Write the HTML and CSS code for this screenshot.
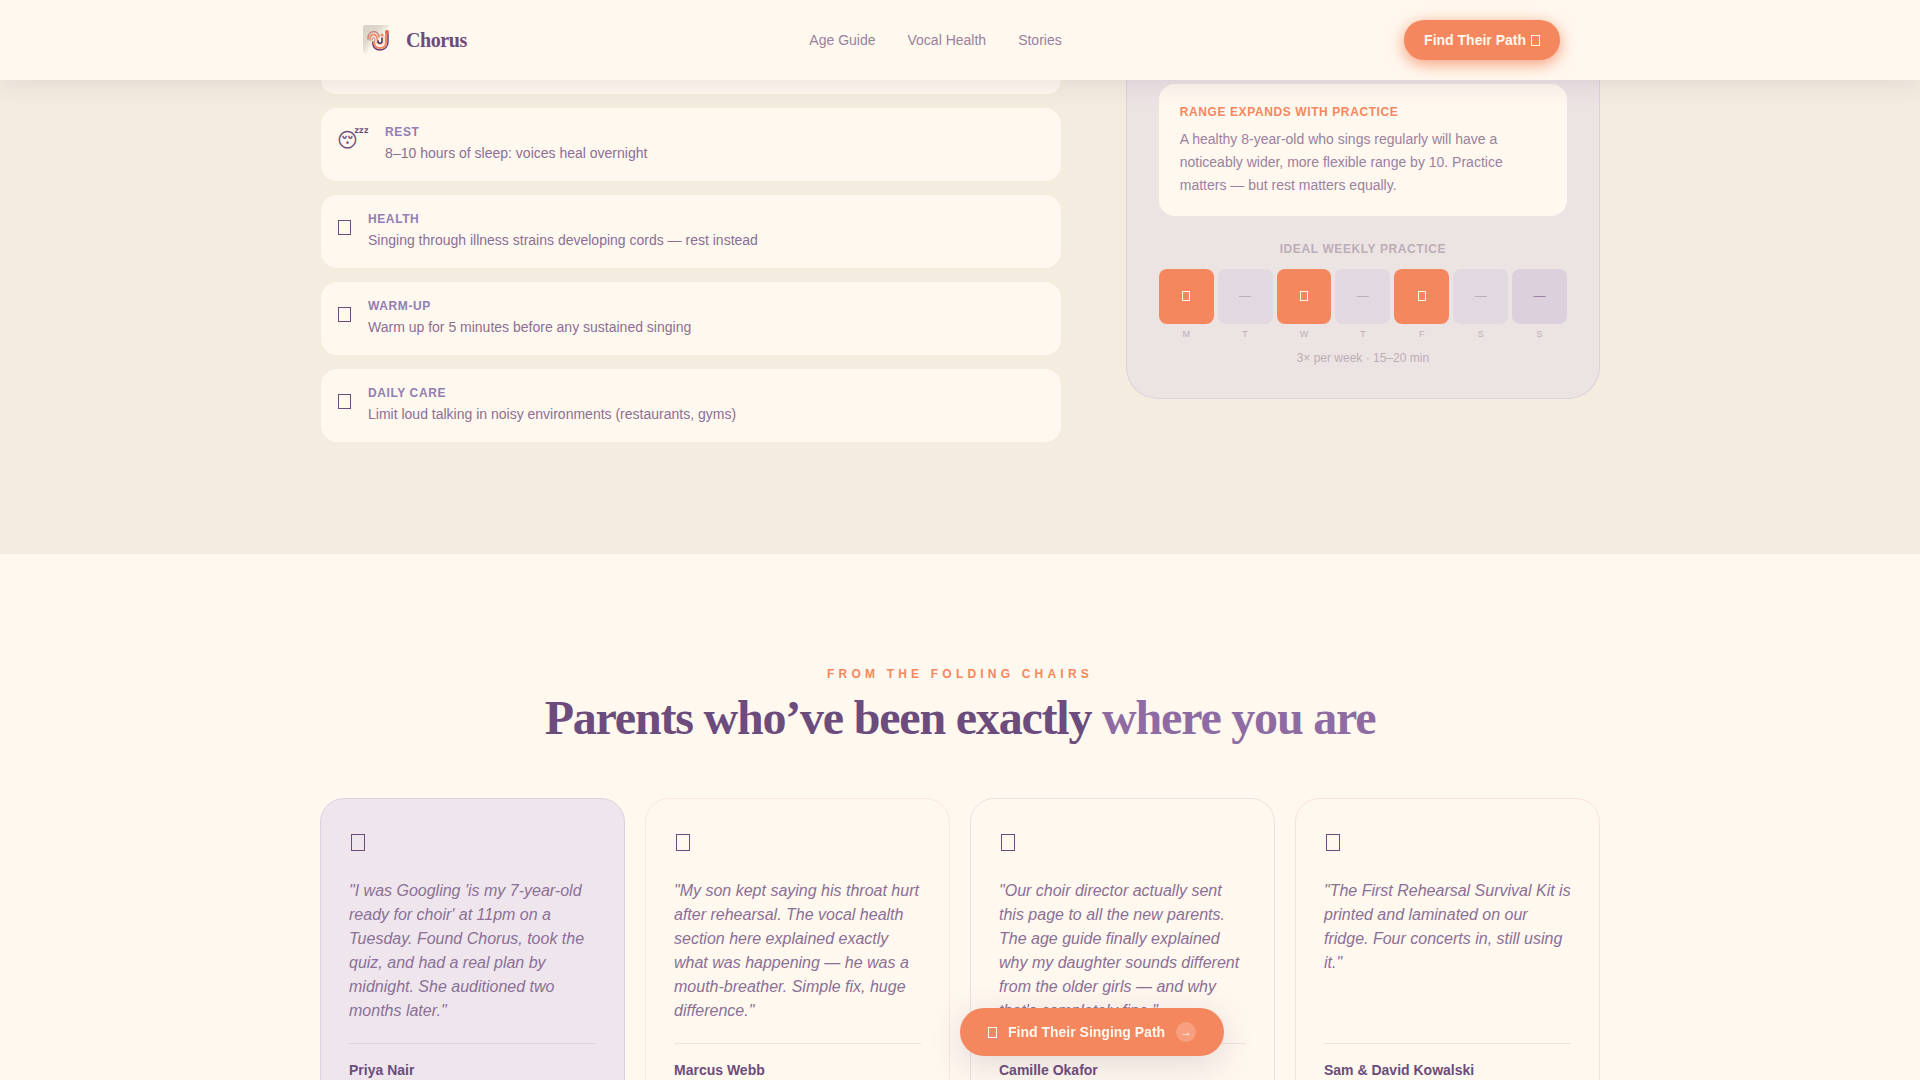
FILE: index.html
```html
<!DOCTYPE html>
<html lang="en">
<head>
    <meta charset="UTF-8">
    <meta name="viewport" content="width=device-width, initial-scale=1.0">
    <title>Chorus</title>
    <link rel="stylesheet" href="styles.css">
</head>
<body>
    <header class="site-header">
        <div class="header-inner">
            <a href="#" class="brand">
                <svg class="brand-logo" viewBox="0 0 32 32" aria-hidden="true">
                    <defs>
                        <linearGradient id="paper" x1="0" y1="0" x2="1" y2="1">
                            <stop offset="0" stop-color="#d6d2c6"/>
                            <stop offset="0.35" stop-color="#e0dacd"/>
                            <stop offset="0.6" stop-color="#fff8ee"/>
                        </linearGradient>
                    </defs>
                    <path d="M5 1h25l-3 4v14L10 22 7 30H5a2 2 0 0 1-2-2V3a2 2 0 0 1 2-2z" fill="url(#paper)"/>
                    <g fill="none" stroke-linecap="round">
                        <path d="M8 15C8 5 19 6 19 13" stroke="#c9837f" stroke-width="1.500"/>
                        <path d="M10 16c0-7 6-7 7-2l1 5" stroke="#f5875f" stroke-width="1.500"/>
                        <path d="M12 16c0-3 3-3 3 0l-1 4" stroke="#b98296" stroke-width="1"/>
                        <path d="M13 18c-1 5 3 8 7 8 5 0 8-4 8-8V10" stroke="#6b3f6d" stroke-width="1.500"/>
                        <path d="M14 18c0 4 3 6 6 6 4 0 6-3 6-6v-8" stroke="#f5875f" stroke-width="2"/>
                        <path d="M16 17c0 5 8 5 8 0v-5" stroke="#fbc0a4" stroke-width="1"/>
                        <path d="M18 17c0 3 4 3 4 0v-3" stroke="#3f2c56" stroke-width="1.500"/>
                    </g>
                    <circle cx="27" cy="8" r="2" fill="#e4604f"/>
                    <circle cx="22" cy="11" r="1.500" fill="#f5875f"/>
                </svg>
                <span class="brand-name">Chorus</span>
            </a>
            <nav class="main-nav">
                <a href="#">Age Guide</a>
                <a href="#health">Vocal Health</a>
                <a href="#stories">Stories</a>
            </nav>
            <button type="button" class="btn btn-header">Find Their Path <span class="glyph"></span></button>
        </div>
    </header>

    <section class="health" id="health">
        <div class="container health-grid">
            <div class="tips">
                <div class="tip-tail"></div>
                <ul class="tip-list">
                    <li class="tip">
                        <span class="tip-icon">😴&#xFE0E;</span>
                        <div>
                            <h4>Rest</h4>
                            <p>8–10 hours of sleep: voices heal overnight</p>
                        </div>
                    </li>
                    <li class="tip">
                        <span class="glyph glyph-md"></span>
                        <div>
                            <h4>Health</h4>
                            <p>Singing through illness strains developing cords — rest instead</p>
                        </div>
                    </li>
                    <li class="tip">
                        <span class="glyph glyph-md"></span>
                        <div>
                            <h4>Warm-up</h4>
                            <p>Warm up for 5 minutes before any sustained singing</p>
                        </div>
                    </li>
                    <li class="tip">
                        <span class="glyph glyph-md"></span>
                        <div>
                            <h4>Daily Care</h4>
                            <p>Limit loud talking in noisy environments (restaurants, gyms)</p>
                        </div>
                    </li>
                </ul>
            </div>

            <aside class="panel">
                <div class="panel-note">
                    <h4>Range expands with practice</h4>
                    <p>A healthy 8-year-old who sings regularly will have a noticeably wider, more flexible range by 10. Practice matters — but rest matters equally.</p>
                </div>
                <h4 class="week-title">Ideal weekly practice</h4>
                <div class="week">
                    <div class="day day-on"><div class="day-box"><span class="glyph glyph-sm"></span></div>M</div>
                    <div class="day"><div class="day-box">—</div>T</div>
                    <div class="day day-on"><div class="day-box"><span class="glyph glyph-sm"></span></div>W</div>
                    <div class="day"><div class="day-box">—</div>T</div>
                    <div class="day day-on"><div class="day-box"><span class="glyph glyph-sm"></span></div>F</div>
                    <div class="day"><div class="day-box">—</div>S</div>
                    <div class="day day-rest"><div class="day-box">—</div>S</div>
                </div>
                <p class="week-note">3× per week · 15–20 min</p>
            </aside>
        </div>
    </section>

    <section class="stories" id="stories">
        <div class="container">
            <p class="eyebrow">From the folding chairs</p>
            <h2>Parents who’ve been exactly <span>where you are</span></h2>
            <div class="story-grid">
                <article class="story story-featured">
                    <span class="glyph glyph-lg"></span>
                    <blockquote>"I was Googling 'is my 7-year-old ready for choir' at 11pm on a Tuesday. Found Chorus, took the quiz, and had a real plan by midnight. She auditioned two months later."</blockquote>
                    <footer>Priya Nair</footer>
                </article>
                <article class="story">
                    <span class="glyph glyph-lg"></span>
                    <blockquote>"My son kept saying his throat hurt after rehearsal. The vocal health section here explained exactly what was happening — he was a mouth-breather. Simple fix, huge difference."</blockquote>
                    <footer>Marcus Webb</footer>
                </article>
                <article class="story story-lilac">
                    <span class="glyph glyph-lg"></span>
                    <blockquote>"Our choir director actually sent this page to all the new parents. The age guide finally explained why my daughter sounds different from the older girls — and why that's completely fine."</blockquote>
                    <footer>Camille Okafor</footer>
                </article>
                <article class="story story-coral">
                    <span class="glyph glyph-lg"></span>
                    <blockquote>"The First Rehearsal Survival Kit is printed and laminated on our fridge. Four concerts in, still using it."</blockquote>
                    <footer>Sam &amp; David Kowalski</footer>
                </article>
            </div>
        </div>
    </section>

    <button type="button" class="btn btn-floating">
        <span class="glyph"></span>
        <span>Find Their Singing Path</span>
        <span class="btn-arrow">→</span>
    </button>
</body>
</html>
```
FILE: styles.css
```css
* {
    box-sizing: border-box;
    margin: 0;
    padding: 0;
}
body {
    font-family: "Liberation Sans", Arial, sans-serif;
    font-size: 14px;
    line-height: 20px;
    color: #6b4c7d;
    background-color: #fff8ee;
}
a {
    color: inherit;
    text-decoration: none;
}
.container {
    max-width: 1280px;
    margin: 0 auto;
}

/* Outlined box used as a small icon */
.glyph {
    flex: none;
    width: 9px;
    height: 11px;
    border: 1px solid currentColor;
}
.glyph-sm {
    width: 8px;
    height: 10px;
}
.glyph-md {
    width: 13px;
    height: 15px;
    margin: 11px 1px 0;
}
.glyph-lg {
    width: 14px;
    height: 17px;
    margin: 7px 2px 28px;
}

/* Buttons */
.btn {
    display: flex;
    align-items: center;
    border: none;
    border-radius: 24px;
    background-color: #f5875f;
    color: #fff8ee;
    font-family: inherit;
    font-size: 14px;
    font-weight: bold;
    line-height: 20px;
    cursor: pointer;
}
.btn-header {
    gap: 5px;
    padding: 10px 20px;
    box-shadow: 0 4px 16px rgba(245, 135, 95, 0.8);
}
.btn-floating {
    position: fixed;
    left: 50%;
    bottom: 24px;
    z-index: 20;
    gap: 11px;
    padding: 14px 28px;
    white-space: nowrap;
    box-shadow: 0 8px 32px rgba(107, 76, 125, 0.18);
}
.btn-arrow {
    display: flex;
    align-items: center;
    justify-content: center;
    width: 20px;
    height: 20px;
    border-radius: 50%;
    background-color: rgba(255, 255, 255, 0.2);
    font-size: 12px;
    font-weight: normal;
}

/* Header */
.site-header {
    position: sticky;
    top: 0;
    z-index: 10;
    background-color: #fff8ee;
    box-shadow: 0 4px 24px rgba(107, 76, 125, 0.12);
}
.header-inner {
    display: flex;
    align-items: center;
    justify-content: space-between;
    max-width: 1280px;
    height: 80px;
    margin: 0 auto;
    padding: 0 40px;
}
.brand {
    display: flex;
    align-items: center;
    gap: 14px;
}
.brand-logo {
    width: 32px;
    height: 32px;
}
.brand-name {
    font-family: "Liberation Serif", "Times New Roman", serif;
    font-size: 20px;
    font-weight: bold;
    letter-spacing: -0.02em;
}
.main-nav {
    display: flex;
    gap: 32px;
    color: #9a819f;
}

/* Vocal health */
.health {
    padding-bottom: 112px;
    background-color: #f4ecdf;
}
.health-grid {
    display: grid;
    grid-template-columns: 61fr 39fr;
    gap: 64px;
    align-items: start;
}
.tip-tail {
    height: 14px;
    margin-bottom: 14px;
    border-radius: 0 0 16px 16px;
    background-color: #fff8ee;
}
.tips {
    padding: 0 1px;
}
.tip-list {
    display: flex;
    flex-direction: column;
    gap: 14px;
    list-style: none;
}
.tip {
    display: flex;
    gap: 16px;
    padding: 14px 16px 17px;
    border-radius: 16px;
    background-color: #fff8ee;
}
.tip-icon {
    font-family: "DejaVu Sans", sans-serif;
    font-size: 20px;
    line-height: 36px;
}
.tip h4,
.panel h4 {
    font-size: 12px;
    letter-spacing: 0.05em;
    text-transform: uppercase;
}
.tip h4 {
    color: #917eb4;
}
.tip p {
    line-height: 22px;
    color: #8b6f97;
}
.panel {
    padding: 4px 32px 30px;
    border: 1px solid #dcd0dc;
    border-top: none;
    border-radius: 0 0 32px 32px;
    background-color: #ece3e3;
    text-align: center;
}
.panel-note {
    padding: 18px 21px 19px;
    border-radius: 16px;
    background-color: #fff8ee;
    text-align: left;
}
.panel-note h4 {
    margin-bottom: 6px;
    color: #f5875f;
}
.panel-note p {
    line-height: 23px;
    color: #9a819f;
}
.panel .week-title {
    margin: 23px 0 10px;
    color: #bcaeb7;
}
.week {
    display: grid;
    grid-template-columns: repeat(7, 1fr);
    gap: 4px;
}
.day {
    color: #bcaeb7;
    font-size: 9px;
    line-height: 20px;
}
.day-box {
    display: flex;
    align-items: center;
    justify-content: center;
    aspect-ratio: 1;
    border-radius: 8px;
    background-color: #e2d8e0;
    font-size: 12px;
}
.day-on .day-box {
    background-color: #f5875f;
    color: #fff8ee;
}
.day-rest .day-box {
    background-color: #dcd0dd;
    color: #9a819f;
}
.week-note {
    margin-top: 4px;
    font-size: 12px;
    color: #bcaeb7;
}

/* Stories */
.stories {
    padding: 110px 0;
    text-align: center;
}
.eyebrow {
    color: #f5875f;
    font-size: 12px;
    font-weight: bold;
    letter-spacing: 0.35em;
    text-transform: uppercase;
}
.stories h2 {
    margin: 8px 0 54px;
    font-family: "Liberation Serif", "Times New Roman", serif;
    font-size: 48px;
    line-height: 52px;
    letter-spacing: -0.025em;
}
.stories h2 span {
    color: #8e6ca3;
}
.story-grid {
    display: grid;
    grid-template-columns: repeat(4, 1fr);
    gap: 20px;
    text-align: left;
}
.story {
    display: flex;
    flex-direction: column;
    padding: 28px;
    border: 1px solid #f8e8de;
    border-radius: 24px;
}
.story-featured {
    border-color: #ddd0e0;
    background-color: #eee6ec;
}
.story-lilac {
    border-color: #eee0e0;
}
.story-coral {
    border-color: #fae3d8;
}
.story blockquote {
    flex: 1;
    margin-bottom: 20px;
    font-size: 16px;
    font-style: italic;
    line-height: 24px;
    color: #8b6f97;
}
.story footer {
    padding-top: 16px;
    border-top: 1px solid rgba(107, 76, 125, 0.12);
    font-weight: bold;
}
```
